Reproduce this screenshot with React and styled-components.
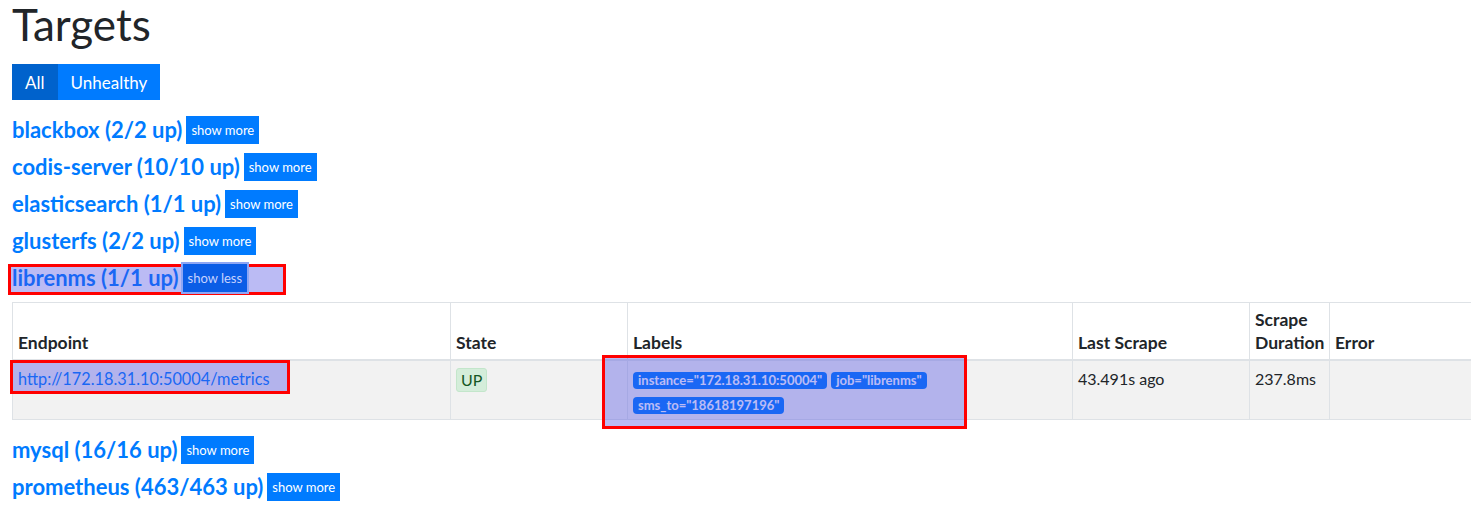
import React from "react";
import styled, { createGlobalStyle } from "styled-components";

const Global = createGlobalStyle`
  html, body { margin: 0; padding: 0; background: #fff; overflow: hidden; }
  body { font-family: Lato, "Noto Sans", sans-serif; color: #212529; font-size: 16px; }
`;

const Page = styled.div`
  padding: 0 0 0 12px;
`;

const Title = styled.h1`
  margin: 0 0 16px;
  font-size: 44px;
  line-height: 48px;
  font-weight: 400;
  color: #212529;
`;

const BtnGroup = styled.div`
  display: inline-flex;
  margin-bottom: 11px;
`;

const ToggleBtn = styled.button`
  border: none;
  height: 36px;
  padding: 0 13px;
  font-family: inherit;
  font-size: 17px;
  color: #fff;
  background: ${(p) => (p.$active ? "#0062cc" : "#007bff")};
`;

const Group = styled.div`
  display: block;
`;

const HeadRow = styled.div`
  position: relative;
  display: flex;
  align-items: center;
  gap: 4px;
  height: 37px;
`;

const JobName = styled.a`
  font-size: 22px;
  font-weight: 700;
  color: #007bff;
  text-decoration: none;
`;

const MoreBtn = styled.button`
  position: relative;
  z-index: ${(p) => (p.$selected ? 2 : "auto")};
  border: none;
  height: 28px;
  padding: 0 5px;
  font-family: inherit;
  font-size: 13px;
  color: ${(p) => (p.$selected ? "#c8d2ff" : "#fff")};
  background: ${(p) => (p.$selected ? "#0b5de6" : "#007bff")};
  box-shadow: ${(p) => (p.$selected ? "0 0 0 2px #8ea6f4" : "none")};
`;

const Highlight = styled.div`
  position: absolute;
  box-sizing: border-box;
  border: 3px solid #ff0000;
  background: rgba(70, 70, 225, 0.37);
  pointer-events: none;
  z-index: 1;
`;

const Table = styled.table`
  border-collapse: collapse;
  width: 100%;
  margin: 6px 0 11px;
  table-layout: fixed;
`;

const Th = styled.th`
  border: 1px solid #dee2e6;
  border-bottom: 2px solid #dee2e6;
  padding: 5px;
  text-align: left;
  vertical-align: bottom;
  font-size: 17.5px;
  font-weight: 700;
  line-height: 23px;
  &:last-child { border-right: none; }
`;

const Tr = styled.tr`
  background: #f2f2f2;
`;

const Td = styled.td`
  position: relative;
  border: 1px solid #dee2e6;
  padding: 5px;
  vertical-align: top;
  font-size: 16px;
  line-height: 25px;
  height: 48px;
  &:last-child { border-right: none; }
`;

const Link = styled.a`
  color: #007bff;
  text-decoration: none;
  font-size: 16.3px;
`;

const StateBadge = styled.span`
  display: inline-block;
  padding: 0 4px;
  line-height: 22px;
  background: #d4edda;
  border: 1px solid #c3e6cb;
  border-radius: 3px;
  color: #155724;
  margin-top: 2px;
`;

const Labels = styled.div`
  display: flex;
  flex-wrap: wrap;
  gap: 8px 4px;
  padding-top: 6px;
  max-width: 320px;
`;

const LabelBadge = styled.span`
  display: inline-block;
  background: #007bff;
  color: #fff;
  font-size: 13px;
  font-weight: 700;
  line-height: 17px;
  padding: 0 5px;
  border-radius: 4px;
`;

const jobsBefore = [
  "blackbox (2/2 up)",
  "codis-server (10/10 up)",
  "elasticsearch (1/1 up)",
  "glusterfs (2/2 up)",
];
const jobsAfter = ["mysql (16/16 up)", "prometheus (463/463 up)"];

function JobHeader({ name }) {
  return (
    <Group>
      <HeadRow>
        <JobName href="#">{name}</JobName>
        <MoreBtn>show more</MoreBtn>
      </HeadRow>
    </Group>
  );
}

export default function App() {
  return (
    <Page>
      <Global />
      <Title>Targets</Title>
      <BtnGroup>
        <ToggleBtn $active>All</ToggleBtn>
        <ToggleBtn>Unhealthy</ToggleBtn>
      </BtnGroup>
      {jobsBefore.map((n) => (
        <JobHeader key={n} name={n} />
      ))}
      <Group>
        <HeadRow>
          <JobName href="#">librenms (1/1 up)</JobName>
          <MoreBtn $selected>show less</MoreBtn>
          <Highlight style={{ left: -4, top: 5, width: 278, height: 31 }} />
        </HeadRow>
        <Table>
          <colgroup>
            <col style={{ width: 438 }} />
            <col style={{ width: 177 }} />
            <col style={{ width: 445 }} />
            <col style={{ width: 177 }} />
            <col style={{ width: 80 }} />
            <col />
          </colgroup>
          <thead>
            <tr>
              <Th>Endpoint</Th>
              <Th>State</Th>
              <Th>Labels</Th>
              <Th>Last Scrape</Th>
              <Th>Scrape Duration</Th>
              <Th>Error</Th>
            </tr>
          </thead>
          <tbody>
            <Tr>
              <Td>
                <Link href="#">http://172.18.31.10:50004/metrics</Link>
                <Highlight style={{ left: -3, top: -1, width: 280, height: 34 }} />
              </Td>
              <Td>
                <StateBadge>UP</StateBadge>
              </Td>
              <Td>
                <Labels>
                  <LabelBadge>instance="172.18.31.10:50004"</LabelBadge>
                  <LabelBadge>job="librenms"</LabelBadge>
                  <LabelBadge>sms_to="18618197196"</LabelBadge>
                </Labels>
                <Highlight style={{ left: -26, top: -6, width: 365, height: 74 }} />
              </Td>
              <Td>43.491s ago</Td>
              <Td>237.8ms</Td>
              <Td></Td>
            </Tr>
          </tbody>
        </Table>
      </Group>
      {jobsAfter.map((n) => (
        <JobHeader key={n} name={n} />
      ))}
    </Page>
  );
}
